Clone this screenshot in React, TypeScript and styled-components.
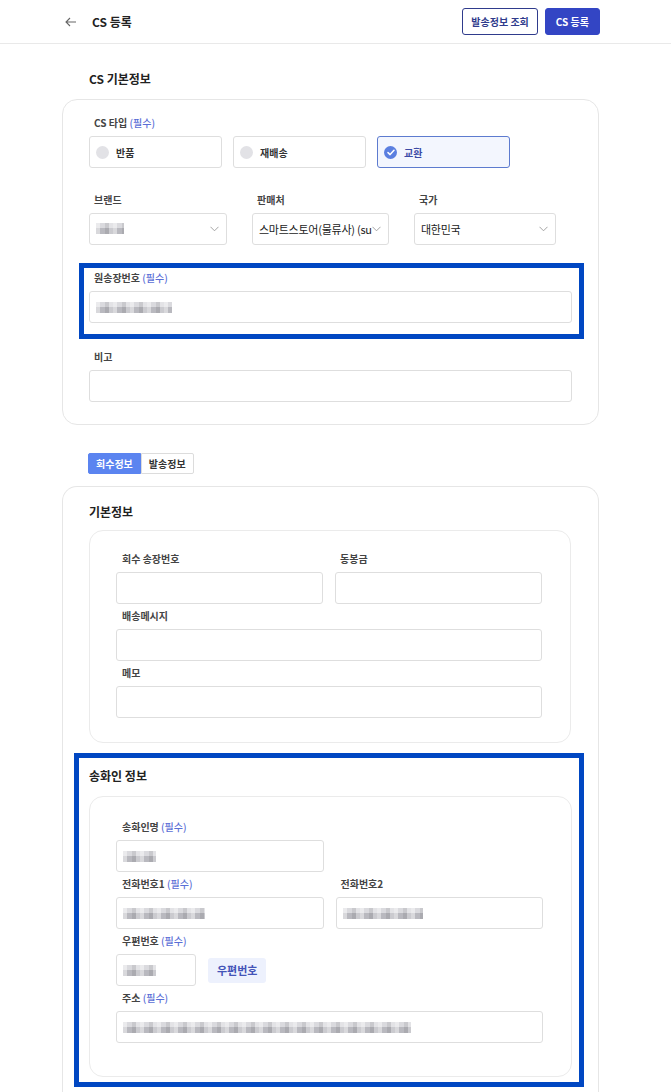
import React from "react";
import styled, { createGlobalStyle } from "styled-components";

const GlobalStyle = createGlobalStyle`
  html, body {
    margin: 0;
    padding: 0;
    background: #fff;
    overflow: hidden;
  }
  body {
    font-family: "Noto Sans CJK KR", "Noto Sans", sans-serif;
    color: #222;
  }
  * {
    box-sizing: border-box;
  }
`;

const Header = styled.header`
  height: 44px;
  display: flex;
  align-items: center;
  padding: 0 71px 0 65px;
  border-bottom: 1px solid #e9e9e9;
`;

const BackButton = styled.button`
  border: 0;
  background: none;
  padding: 0;
  display: flex;
  align-items: center;
  color: #666;
`;

const PageTitle = styled.h1`
  margin: 0 0 0 15px;
  font-size: 12px;
  font-weight: 700;
  color: #222;
  flex: 1;
`;

const HeaderActions = styled.div`
  display: flex;
  gap: 7px;
`;

const HeaderButton = styled.button<{ $primary?: boolean }>`
  height: 27px;
  padding: 0 ${(p) => (p.$primary ? "10px" : "8px")};
  border-radius: 3px;
  font-family: inherit;
  font-size: 10px;
  font-weight: 700;
  border: 1px solid ${(p) => (p.$primary ? "#3345c4" : "#2f3b8c")};
  background: ${(p) => (p.$primary ? "#3345c4" : "#fff")};
  color: ${(p) => (p.$primary ? "#fff" : "#2f3b8c")};
`;

const Main = styled.main`
  margin-left: 62px;
  width: 537px;
`;

const SectionTitle = styled.h2`
  margin: 0;
  padding: 26px 0 11px 27px;
  font-size: 12px;
  line-height: 18px;
  font-weight: 700;
  color: #222;
`;

const Card = styled.section`
  border: 1px solid #e6e6e6;
  border-radius: 15px;
  padding: 16px 26px 22px;
`;

const OuterCard = styled.section`
  margin-top: 12px;
  border: 1px solid #e6e6e6;
  border-bottom: 0;
  border-radius: 15px 15px 0 0;
  padding: 16px 14px 10px 26px;
`;

const CardTitle = styled.h3<{ $gap: number }>`
  margin: 0 0 ${(p) => p.$gap}px;
  font-size: 12px;
  line-height: 18px;
  font-weight: 700;
  color: #222;
`;

const InnerCard = styled.div<{ $top: number; $bottom: number; $right: number }>`
  border: 1px solid #ebebeb;
  border-radius: 14px;
  padding: ${(p) => p.$top}px 28px ${(p) => p.$bottom}px 26px;
  margin-right: ${(p) => p.$right}px;
`;

const Field = styled.div<{ $span?: boolean }>`
  display: flex;
  flex-direction: column;
  grid-column: ${(p) => (p.$span ? "1 / -1" : "auto")};
`;

const Label = styled.label<{ $indent?: number }>`
  font-size: 10px;
  line-height: 14px;
  font-weight: 700;
  color: #444;
  padding-left: ${(p) => p.$indent ?? 5}px;
  margin-bottom: 6px;
`;

const Required = styled.span`
  color: #5a6ed6;
  font-weight: 500;
`;

const RadioRow = styled.div`
  display: grid;
  grid-template-columns: 133px 133px 133px;
  column-gap: 11px;
`;

const RadioBox = styled.div<{ $checked?: boolean }>`
  height: 32px;
  display: flex;
  align-items: center;
  gap: 7px;
  padding-left: 6px;
  border-radius: 3px;
  border: 1px solid ${(p) => (p.$checked ? "#5d7bcf" : "#dedede")};
  background: ${(p) => (p.$checked ? "#f3f6fe" : "#fff")};
  font-size: 10px;
  font-weight: 700;
  color: ${(p) => (p.$checked ? "#3c4aa6" : "#333")};
`;

const RadioDot = styled.span<{ $checked?: boolean }>`
  width: 13px;
  height: 13px;
  border-radius: 50%;
  background: ${(p) => (p.$checked ? "#5b7fe0" : "#e2e2e6")};
  display: flex;
  align-items: center;
  justify-content: center;
`;

const SelectRow = styled.div`
  margin-top: 25px;
  display: grid;
  grid-template-columns: 138px 137px 142px;
  column-gap: 25px;
`;

const SelectBox = styled.div`
  height: 32px;
  display: flex;
  align-items: center;
  border: 1px solid #dedede;
  border-radius: 3px;
  padding: 0 7px 0 6px;
  font-size: 11px;
  color: #222;
`;

const SelectText = styled.span`
  flex: 1;
  min-width: 0;
  white-space: nowrap;
  letter-spacing: -0.25px;
`;

const ChevronWrap = styled.span`
  flex-shrink: 0;
  display: flex;
  margin-left: 1px;
`;

const Highlight = styled.div<{ $m: string; $p: string }>`
  border: 5px solid #0047c2;
  margin: ${(p) => p.$m};
  padding: ${(p) => p.$p};
`;

const InputBox = styled.div<{ $width?: number }>`
  height: 32px;
  width: ${(p) => (p.$width ? `${p.$width}px` : "100%")};
  display: flex;
  align-items: center;
  border: 1px solid #dedede;
  border-radius: 3px;
  padding: 0 6px;
  background: #fff;
`;

const Spaced = styled.div`
  margin-top: 11px;
`;

const Mosaic = styled.span<{ $w: number }>`
  display: inline-block;
  width: ${(p) => p.$w}px;
  height: 11px;
  background:
    repeating-linear-gradient(
      90deg,
      rgba(255, 255, 255, 0.45) 0 4px,
      transparent 4px 9px,
      rgba(0, 0, 0, 0.08) 9px 13px,
      rgba(255, 255, 255, 0.25) 13px 17px
    ),
    linear-gradient(#dadade 0 50%, #b9b9bf 50% 100%);
  filter: blur(0.5px);
`;

const Tabs = styled.div`
  margin: 28px 0 0 26px;
  display: flex;
`;

const Tab = styled.button<{ $active?: boolean }>`
  height: 21px;
  padding: 0 7px;
  font-family: inherit;
  font-size: 10px;
  font-weight: 700;
  border-radius: ${(p) => (p.$active ? "2px 0 0 2px" : "0 2px 2px 0")};
  border: 1px solid ${(p) => (p.$active ? "#5b84f0" : "#dcdcdc")};
  background: ${(p) => (p.$active ? "#5b84f0" : "#fff")};
  color: ${(p) => (p.$active ? "#fff" : "#333")};
`;

const FieldGrid = styled.div`
  display: grid;
  grid-template-columns: 1fr 1fr;
  column-gap: 12px;
  row-gap: 5px;
`;

const PostalRow = styled.div`
  display: flex;
  align-items: center;
  gap: 12px;
`;

const PostalButton = styled.button`
  height: 25px;
  padding: 0 9px;
  border: 0;
  border-radius: 3px;
  background: #edf1fd;
  color: #4454b8;
  font-family: inherit;
  font-size: 11px;
  font-weight: 700;
`;

const Chevron = () => (
  <ChevronWrap>
    <svg width="9" height="6" viewBox="0 0 9 6" fill="none">
      <polyline points="0.5,0.8 4.5,4.8 8.5,0.8" stroke="#9a9a9a" strokeWidth="0.9" />
    </svg>
  </ChevronWrap>
);

const Check = () => (
  <svg width="8" height="7" viewBox="0 0 8 7" fill="none">
    <polyline points="1,3.6 3.1,5.6 7,1.3" stroke="#fff" strokeWidth="1.5" strokeLinecap="round" strokeLinejoin="round" />
  </svg>
);

const ReqLabel: React.FC<{ text: string; required?: boolean; indent?: number }> = ({
  text,
  required,
  indent,
}) => (
  <Label $indent={indent}>
    {text}
    {required && <Required> (필수)</Required>}
  </Label>
);

const App: React.FC = () => {
  return (
    <>
      <GlobalStyle />
      <Header>
        <BackButton aria-label="back">
          <svg width="12" height="10" viewBox="0 0 12 10" fill="none">
            <path d="M11 5H1.5M5 1L1 5l4 4" stroke="#666" strokeWidth="1.1" />
          </svg>
        </BackButton>
        <PageTitle>CS 등록</PageTitle>
        <HeaderActions>
          <HeaderButton>발송정보 조회</HeaderButton>
          <HeaderButton $primary>CS 등록</HeaderButton>
        </HeaderActions>
      </Header>

      <Main>
        <SectionTitle>CS 기본정보</SectionTitle>
        <Card>
          <Field>
            <ReqLabel text="CS 타입" required />
            <RadioRow>
              <RadioBox>
                <RadioDot />
                반품
              </RadioBox>
              <RadioBox>
                <RadioDot />
                재배송
              </RadioBox>
              <RadioBox $checked>
                <RadioDot $checked>
                  <Check />
                </RadioDot>
                교환
              </RadioBox>
            </RadioRow>
          </Field>

          <SelectRow>
            <Field>
              <ReqLabel text="브랜드" />
              <SelectBox>
                <SelectText>
                  <Mosaic $w={28} />
                </SelectText>
                <Chevron />
              </SelectBox>
            </Field>
            <Field>
              <ReqLabel text="판매처" />
              <SelectBox>
                <SelectText>스마트스토어(물류사) (su</SelectText>
                <Chevron />
              </SelectBox>
            </Field>
            <Field>
              <ReqLabel text="국가" />
              <SelectBox>
                <SelectText>대한민국</SelectText>
                <Chevron />
              </SelectBox>
            </Field>
          </SelectRow>

          <Highlight $m="18px -12px 0 -10px" $p="3px 7px 11px 5px">
            <Field>
              <ReqLabel text="원송장번호" required />
              <InputBox>
                <Mosaic $w={76} />
              </InputBox>
            </Field>
          </Highlight>

          <Spaced>
            <Field>
              <ReqLabel text="비고" />
              <InputBox />
            </Field>
          </Spaced>
        </Card>

        <Tabs>
          <Tab $active>회수정보</Tab>
          <Tab>발송정보</Tab>
        </Tabs>

        <OuterCard>
          <CardTitle $gap={9}>기본정보</CardTitle>
          <InnerCard $top={21} $bottom={24} $right={13}>
            <FieldGrid>
              <Field>
                <ReqLabel text="회수 송장번호" indent={6} />
                <InputBox />
              </Field>
              <Field>
                <ReqLabel text="동봉금" indent={5} />
                <InputBox />
              </Field>
              <Field $span>
                <ReqLabel text="배송메시지" indent={6} />
                <InputBox />
              </Field>
              <Field $span>
                <ReqLabel text="메모" indent={6} />
                <InputBox />
              </Field>
            </FieldGrid>
          </InnerCard>

          <Highlight $m="10px 0 0 -15px" $p="9px 7px 5px 10px">
            <CardTitle $gap={11}>송화인 정보</CardTitle>
            <InnerCard $top={23} $bottom={33} $right={0}>
              <FieldGrid>
                <Field>
                  <ReqLabel text="송화인명" required indent={6} />
                  <InputBox>
                    <Mosaic $w={33} />
                  </InputBox>
                </Field>
                <div />
                <Field>
                  <ReqLabel text="전화번호1" required indent={6} />
                  <InputBox>
                    <Mosaic $w={82} />
                  </InputBox>
                </Field>
                <Field>
                  <ReqLabel text="전화번호2" indent={5} />
                  <InputBox>
                    <Mosaic $w={80} />
                  </InputBox>
                </Field>
                <Field $span>
                  <ReqLabel text="우편번호" required indent={6} />
                  <PostalRow>
                    <InputBox $width={80}>
                      <Mosaic $w={33} />
                    </InputBox>
                    <PostalButton>우편번호</PostalButton>
                  </PostalRow>
                </Field>
                <Field $span>
                  <ReqLabel text="주소" required indent={6} />
                  <InputBox>
                    <Mosaic $w={288} />
                  </InputBox>
                </Field>
              </FieldGrid>
            </InnerCard>
          </Highlight>
        </OuterCard>
      </Main>
    </>
  );
};

export default App;
